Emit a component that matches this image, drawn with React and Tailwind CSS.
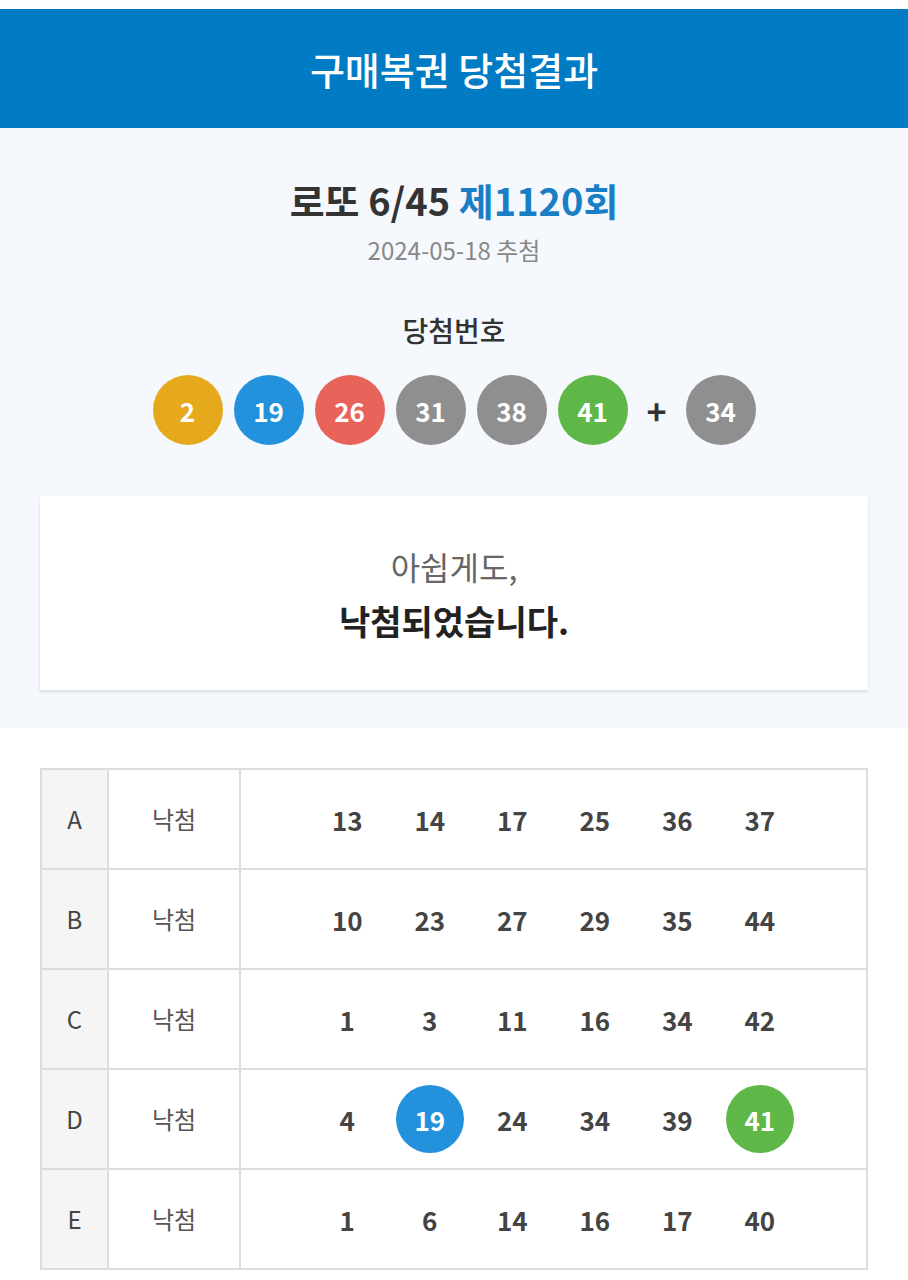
import React from "react";

const balls = [
  { n: 2, c: "bg-[#e5a91b]" },
  { n: 19, c: "bg-[#2391db]" },
  { n: 26, c: "bg-[#e8645a]" },
  { n: 31, c: "bg-[#8f8f8f]" },
  { n: 38, c: "bg-[#8f8f8f]" },
  { n: 41, c: "bg-[#5eb746]" },
];

const rows = [
  { k: "A", nums: [13, 14, 17, 25, 36, 37] },
  { k: "B", nums: [10, 23, 27, 29, 35, 44] },
  { k: "C", nums: [1, 3, 11, 16, 34, 42] },
  { k: "D", nums: [4, 19, 24, 34, 39, 41] },
  { k: "E", nums: [1, 6, 14, 16, 17, 40] },
];

const hits = { 19: "bg-[#2391db]", 41: "bg-[#5eb746]" };

function Ball({ n, c }) {
  return (
    <div
      className={`flex h-[70px] w-[70px] items-center justify-center rounded-full text-[26px] font-bold text-white ${c}`}
    >
      {n}
    </div>
  );
}

export default function App() {
  return (
    <div
      className="min-h-screen bg-white pt-[9px]"
      style={{ fontFamily: '"Noto Sans CJK KR", "Noto Sans", sans-serif' }}
    >
      <header className="flex h-[119px] items-center justify-center bg-[#007bc4]">
        <h1 className="text-[38px] font-medium text-white">구매복권 당첨결과</h1>
      </header>

      <section className="bg-[#f5f9fd] px-10 pb-[38px] pt-[44px]">
        <div className="text-center">
          <h2 className="text-[38px] font-bold leading-[56px] text-[#333]">
            로또 6/45 <span className="text-[#1a7ec6]">제1120회</span>
          </h2>
          <p className="mt-[6px] text-[24px] leading-[32px] text-[#888]">2024-05-18 추첨</p>
          <p className="mt-[45px] text-[28px] font-medium leading-[38px] text-[#333]">당첨번호</p>
        </div>

        <div className="mt-[26px] flex items-center justify-center">
          <div className="flex gap-[11px]">
            {balls.map((b) => (
              <Ball key={b.n} {...b} />
            ))}
          </div>
          <div className="flex w-[58px] items-center justify-center text-[34px] font-bold text-[#333]">
            +
          </div>
          <Ball n={34} c="bg-[#8f8f8f]" />
        </div>

        <div className="mt-[51px] flex h-[194px] flex-col items-center justify-center bg-white shadow-[0_2px_3px_rgba(0,0,0,0.12)]">
          <p className="text-[32px] leading-[44px] text-[#666]">아쉽게도,</p>
          <p className="mt-[11px] text-[34px] font-bold leading-[44px] text-[#222]">낙첨되었습니다.</p>
        </div>
      </section>

      <section className="px-10 pt-[40px]">
        <table className="w-full border-collapse border-2 border-[#dddddd]">
          <tbody>
            {rows.map((r) => (
              <tr key={r.k} className="h-[100px]">
                <td className="w-[67px] border-2 border-[#dddddd] bg-[#f5f5f5] text-center text-[24px] text-[#444]">
                  {r.k}
                </td>
                <td className="w-[132px] border-2 border-[#dddddd] text-center text-[24px] text-[#555]">
                  낙첨
                </td>
                <td className="border-2 border-[#dddddd]">
                  <div className="flex justify-center">
                    {r.nums.map((n, i) => (
                      <div key={i} className="flex w-[82.5px] items-center justify-center">
                        {hits[n] && r.k === "D" ? (
                          <div
                            className={`flex h-[68px] w-[68px] items-center justify-center rounded-full text-[26px] font-bold text-white ${hits[n]}`}
                          >
                            {n}
                          </div>
                        ) : (
                          <span className="text-[26px] font-bold text-[#444]">{n}</span>
                        )}
                      </div>
                    ))}
                  </div>
                </td>
              </tr>
            ))}
          </tbody>
        </table>
      </section>
    </div>
  );
}
